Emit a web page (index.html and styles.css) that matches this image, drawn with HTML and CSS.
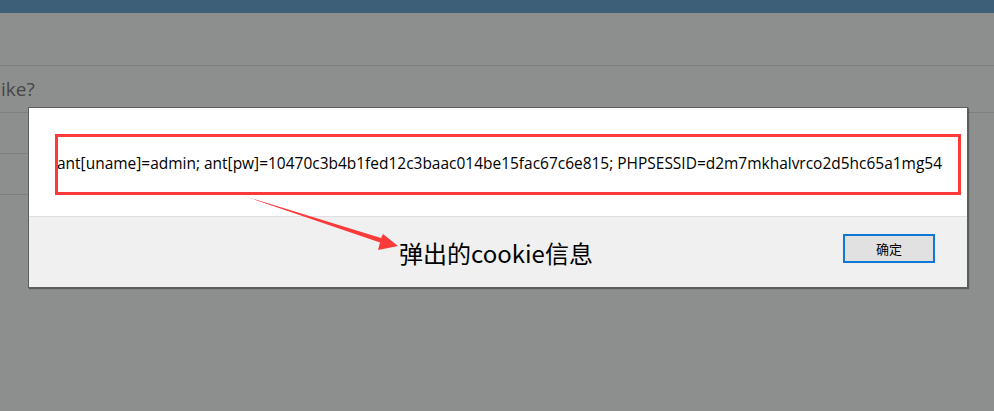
FILE: index.html
```html
<!DOCTYPE html>
<html lang="zh">
<head>
<meta charset="utf-8">
<title>cookie</title>
<link rel="stylesheet" href="styles.css">
</head>
<body>
<div class="page">
  <div class="topbar"></div>
  <div class="band"></div>
  <div class="question">ike?</div>
  <div class="row"></div>
  <div class="row"></div>
</div>

<div class="dialog">
  <div class="dialog-body">
    <p class="msg">ant[uname]=admin; ant[pw]=10470c3b4b1fed12c3baac014be15fac67c6e815; PHPSESSID=d2m7mkhalvrco2d5hc65a1mg54</p>
  </div>
  <div class="dialog-foot">
    <button class="ok">确定</button>
  </div>
</div>

<div class="mark-box"></div>
<svg class="mark-arrow" width="994" height="411" viewBox="0 0 994 411">
  <path d="M244 196 L381 238 L383 234 L398 246 L378 250 L380 242.5 Z" fill="#fb3a3a"/>
</svg>
<div class="mark-label">弹出的cookie信息</div>
</body>
</html>
```

FILE: styles.css
```css
html, body {
  margin: 0;
  padding: 0;
}
body {
  width: 994px;
  height: 411px;
  overflow: hidden;
  background: #8d8e8e;
  font-family: "Open Sans", "Noto Sans CJK SC", sans-serif;
  position: relative;
}
.page {
  display: flex;
  flex-direction: column;
}
.topbar {
  height: 13px;
  background: #3e5f78;
}
.band {
  height: 52px;
  border-bottom: 1px solid #7e7f7f;
}
.question {
  height: 47px;
  box-sizing: border-box;
  padding: 10px 0 0 1px;
  font-size: 19px;
  color: #474747;
  border-bottom: 1px solid #7e7f7f;
}
.row {
  height: 40px;
  border-bottom: 1px solid #7e7f7f;
  width: 40px;
}
.dialog {
  position: absolute;
  left: 28px;
  top: 107px;
  width: 938px;
  height: 179px;
  border: 1px solid #5d5d5d;
  background: #f0f0f0;
  display: flex;
  flex-direction: column;
  box-shadow: 1px 1px 1px rgba(60,60,60,0.6);
}
.dialog-body {
  height: 109px;
  background: #ffffff;
  border-bottom: 1px solid #dfdfdf;
  box-sizing: border-box;
  padding: 44px 0 0 28px;
}
.msg {
  margin: 0;
  font-size: 15.48px;
  line-height: 22px;
  color: #000;
  white-space: nowrap;
}
.dialog-foot {
  flex: 1;
  display: flex;
  justify-content: flex-end;
  align-items: flex-start;
  padding: 17px 32px 0 0;
}
.ok {
  width: 92px;
  height: 29px;
  border: 2px solid #0f78d6;
  background: #e1e1e1;
  font-family: "Noto Sans CJK SC", sans-serif;
  font-size: 13px;
  color: #000;
  padding: 0;
  margin: 0;
}
.mark-box {
  position: absolute;
  left: 55px;
  top: 134px;
  width: 906px;
  height: 61px;
  box-sizing: border-box;
  border: 3px solid #fd3a3a;
}
.mark-arrow {
  position: absolute;
  left: 0;
  top: 0;
}
.mark-label {
  position: absolute;
  left: 399px;
  top: 237px;
  font-family: "Noto Sans CJK SC", sans-serif;
  font-size: 24px;
  line-height: 32px;
  color: #000;
}
```
